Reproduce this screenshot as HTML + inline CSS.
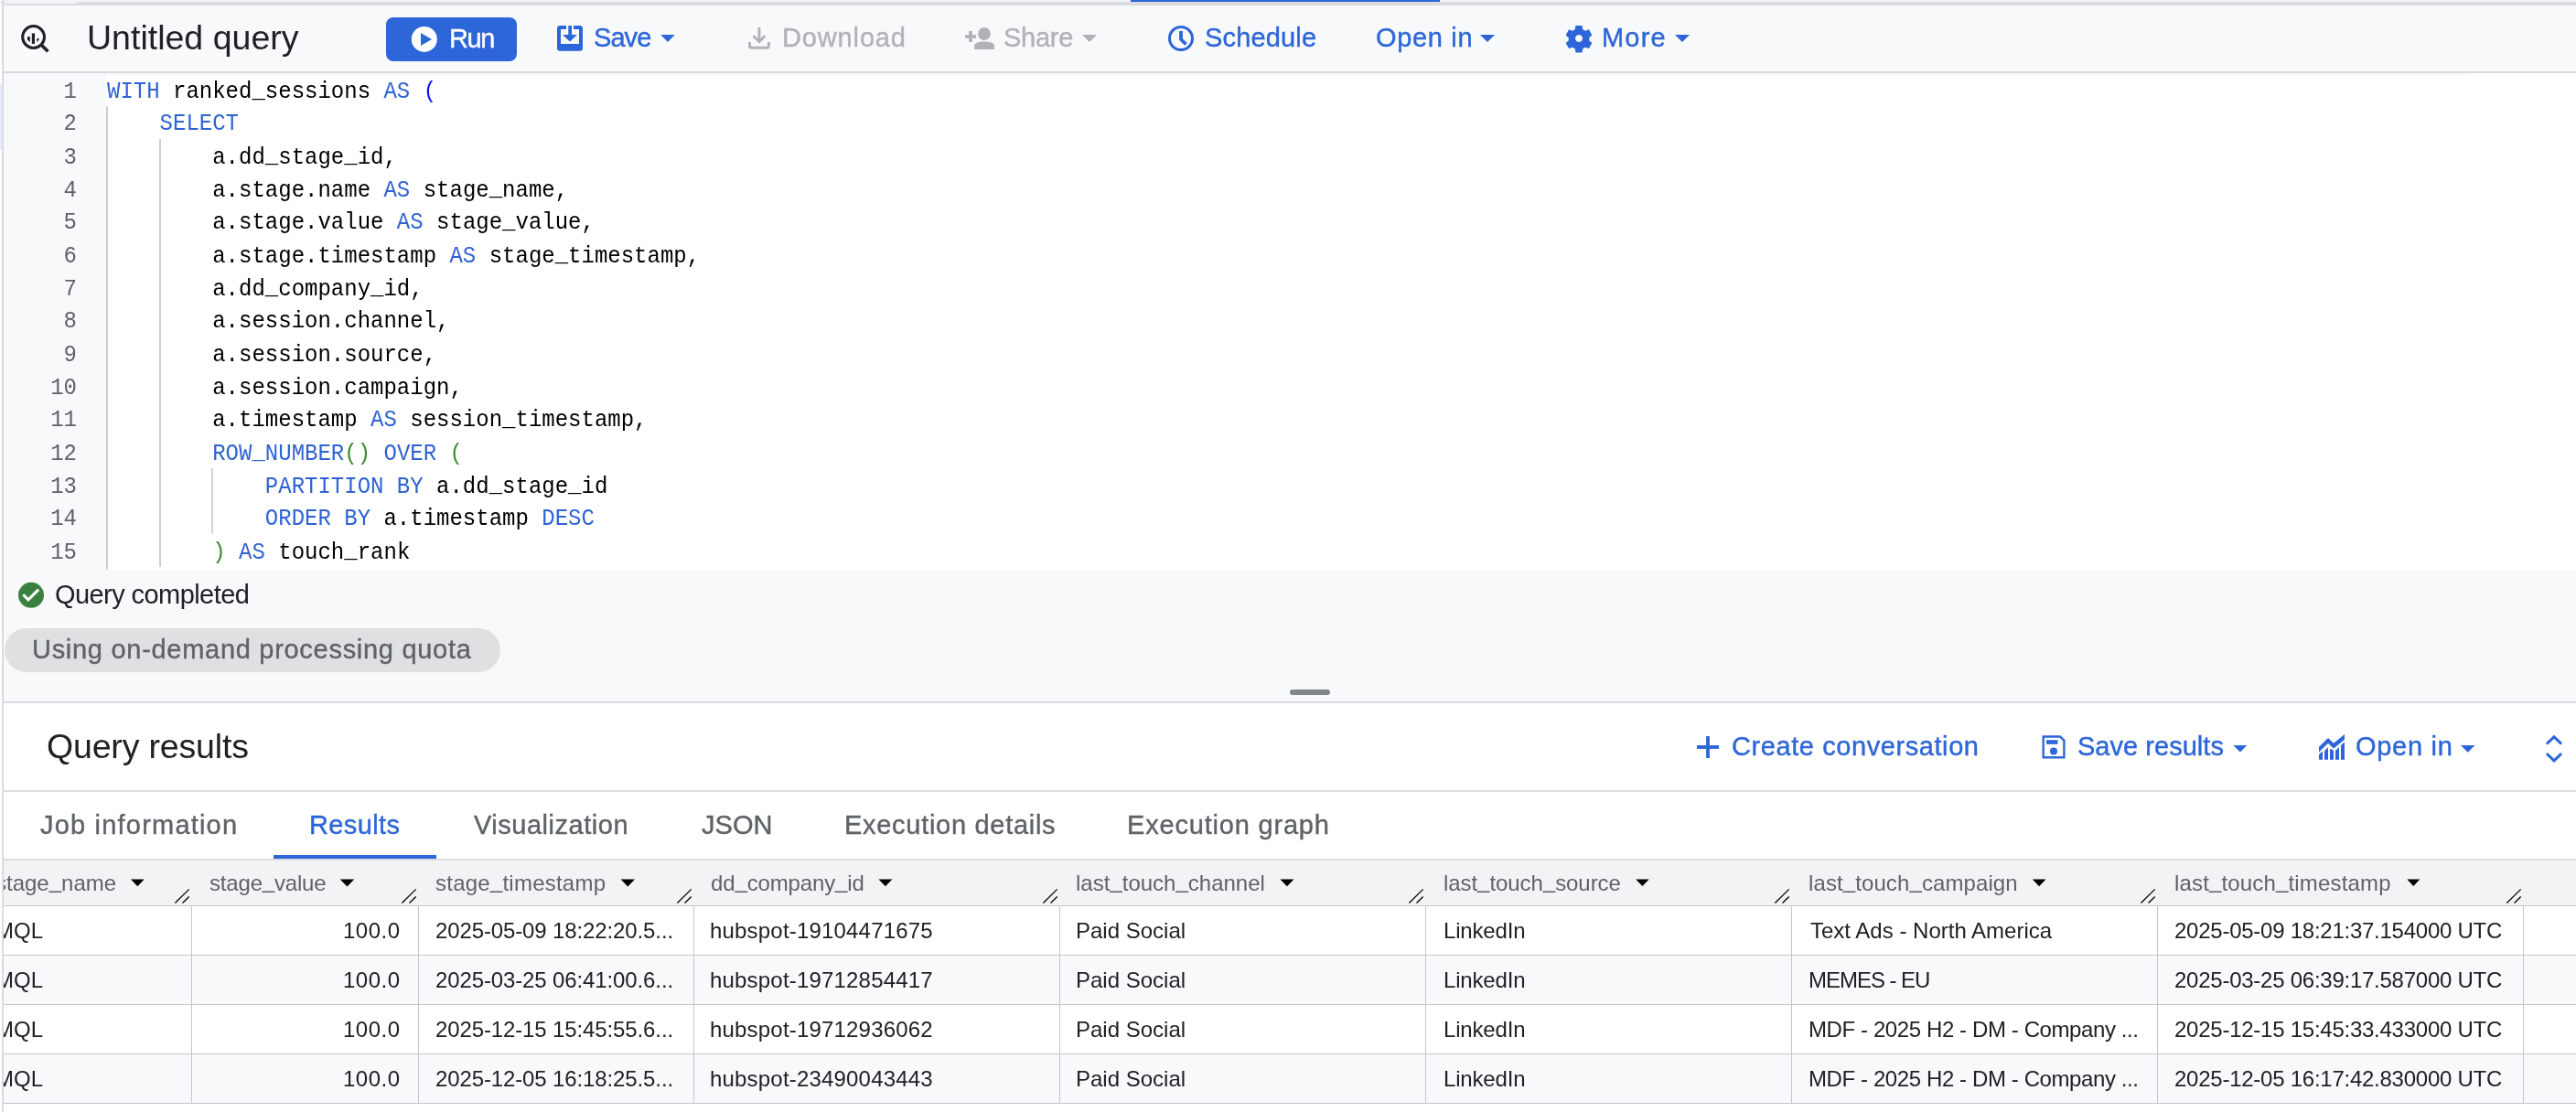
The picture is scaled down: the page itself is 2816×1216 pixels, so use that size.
<!DOCTYPE html>
<html><head><meta charset="utf-8">
<style>
html,body{margin:0;padding:0;}
body{width:2816px;height:1216px;position:relative;overflow:hidden;background:#fff;font-family:"Liberation Sans",sans-serif;}
.a{position:absolute;}
.t{position:absolute;white-space:pre;}
.s28{font-size:29px;line-height:29px;}
.s36{font-size:37.5px;line-height:37.5px;}
.s24{font-size:24px;line-height:24px;}
.blue{color:#2d66d8;}
.dis{color:#b0b2b5;}
.dark{color:#202124;}
.gray{color:#5f6368;}
svg{position:absolute;overflow:visible;}
.t,.code,.ln,.hd,.dt{will-change:transform;}
.s28{-webkit-text-stroke:0.4px;}
.qc{-webkit-text-stroke:0;}
/* editor */
.code{position:absolute;left:116.8px;font-family:"Liberation Mono",monospace;font-size:24px;line-height:33.333px;transform:scaleY(1.08);transform-origin:0 0;white-space:pre;color:#000;}
.ln{position:absolute;left:4px;width:80px;text-align:right;font-family:"Liberation Mono",monospace;font-size:24px;line-height:33.333px;transform:scaleY(1.08);transform-origin:0 0;color:#5f6368;}
.k{color:#2f63d2;}
.p{color:#3b8a2e;}
.pb{color:#0a14f5;}
.uh{position:relative;top:-3px;}
.uc{position:relative;top:-1.5px;}
.guide{position:absolute;width:2px;background:#cfcfcf;}
/* table */
.col{position:absolute;top:991px;width:1px;height:215px;background:#c4c7cb;}
.row{position:absolute;left:4px;width:2812px;height:1px;background:#c4c7cb;}
.hd{position:absolute;top:954px;font-size:24px;line-height:24px;color:#5f6368;white-space:pre;}
.dt{position:absolute;font-size:24px;line-height:24px;color:#202124;white-space:pre;}
</style></head>
<body>
<!-- top strip -->
<div class="a" style="left:4px;top:0;width:2812px;height:6px;background:#f1f3f4"></div>
<div class="a" style="left:4px;top:4px;width:80px;height:2px;background:#dadce0"></div>
<div class="a" style="left:84px;top:2px;width:2732px;height:4px;background:#dadce0"></div>
<div class="a" style="left:1236px;top:0;width:338px;height:2px;background:#2d66d8"></div>
<!-- header -->
<div class="a" style="left:4px;top:6px;width:2812px;height:72px;background:#f8f9fa"></div>
<div class="a" style="left:4px;top:78px;width:2812px;height:2px;background:#d9dadd"></div>

<!-- bq logo -->
<svg style="left:0;top:0" width="80" height="70" viewBox="0 0 80 70">
 <circle cx="36.6" cy="40.5" r="11.9" fill="none" stroke="#202124" stroke-width="3"/>
 <line x1="44.8" y1="48.8" x2="52.5" y2="56.2" stroke="#202124" stroke-width="3.6"/>
 <rect x="34.8" y="36.4" width="3.2" height="11.5" fill="#202124"/>
 <path d="M30 40 h2.8 v5.9 q-2 -0.8 -2.8 -2.6z" fill="#202124"/>
 <path d="M40.3 42 h2.6 q-0.4 2.6 -2.6 4z" fill="#202124"/>
</svg>
<div class="t s36 dark" style="left:94.6px;top:23px;letter-spacing:0.01px">Untitled query</div>

<!-- Run button -->
<div class="a" style="left:422px;top:19px;width:143px;height:48px;background:#2d66d8;border-radius:8px"></div>
<svg style="left:0;top:0" width="600" height="70" viewBox="0 0 600 70">
 <circle cx="463.8" cy="42.9" r="14" fill="#fff"/>
 <path d="M460 36.1 L472 42.9 L460 50z" fill="#2d66d8"/>
</svg>
<div class="t s28" style="left:490.6px;top:28px;letter-spacing:-1.4px;color:#fff">Run</div>

<!-- Save -->
<svg style="left:0;top:0" width="760" height="70" viewBox="0 0 760 70">
 <path d="M612 28 h7 v4 h-6 v16 h20 v-16 h-6 v-4 h7 a3 3 0 0 1 3 3 v21.8 a3 3 0 0 1 -3 3 h-22 a3 3 0 0 1 -3 -3 v-21.8 a3 3 0 0 1 3 -3z" fill="#2d66d8"/>
 <rect x="621.3" y="28" width="3.7" height="11" fill="#2d66d8"/>
 <path d="M615 38 h15.9 l-7.95 7.6z" fill="#2d66d8"/>
 <path d="M722.3 38 h15.4 l-7.7 7.9z" fill="#2d66d8"/>
</svg>
<div class="t s28 blue" style="left:648.5px;top:27px;letter-spacing:-0.93px">Save</div>

<!-- Download -->
<svg style="left:0;top:0" width="1000" height="70" viewBox="0 0 1000 70">
 <line x1="829.9" y1="30" x2="829.9" y2="45" stroke="#b0b2b5" stroke-width="3"/>
 <path d="M823.6 39.3 L829.9 45.6 L836.2 39.3" fill="none" stroke="#b0b2b5" stroke-width="3"/>
 <path d="M819.5 46 v4 a2.2 2.2 0 0 0 2.2 2.2 h16.5 a2.2 2.2 0 0 0 2.2 -2.2 v-4" fill="none" stroke="#b0b2b5" stroke-width="3"/>
</svg>
<div class="t s28 dis" style="left:854.5px;top:27px;letter-spacing:0.86px">Download</div>

<!-- Share -->
<svg style="left:0;top:0" width="1250" height="70" viewBox="0 0 1250 70">
 <rect x="1055" y="38.2" width="12" height="3.6" fill="#b0b2b5"/>
 <rect x="1059.1" y="34" width="3.8" height="12" fill="#b0b2b5"/>
 <circle cx="1076" cy="37" r="6.9" fill="#b0b2b5"/>
 <path d="M1065.1 54 v-4 c0 -3.2 6 -4.4 10.95 -4.4 c4.95 0 10.95 1.2 10.95 4.4 v4z" fill="#b0b2b5"/>
 <path d="M1183 38 h16 l-8 8z" fill="#b0b2b5"/>
</svg>
<div class="t s28 dis" style="left:1097px;top:27px;letter-spacing:-0.25px">Share</div>

<!-- Schedule -->
<svg style="left:0;top:0" width="1350" height="70" viewBox="0 0 1350 70">
 <circle cx="1291" cy="42" r="12.5" fill="none" stroke="#2d66d8" stroke-width="3"/>
 <path d="M1291 34 v9 l5.5 5.3" fill="none" stroke="#2d66d8" stroke-width="3.8"/>
</svg>
<div class="t s28 blue" style="left:1316.9px;top:27px;letter-spacing:0.16px">Schedule</div>

<!-- Open in -->
<svg style="left:0;top:0" width="1700" height="70" viewBox="0 0 1700 70">
 <path d="M1618 38 h16 l-8 8z" fill="#2d66d8"/>
</svg>
<div class="t s28 blue" style="left:1503.6px;top:27px;letter-spacing:0.67px">Open in</div>

<!-- More -->
<svg style="left:0;top:0" width="1900" height="70" viewBox="0 0 1900 70">
 <g transform="translate(1726 42)">
  <path d="M-3.5 -14 h7 l0.8 4.2 a10 10 0 0 1 2.6 1.5 l4 -1.4 l3.5 6.1 l-3.2 2.8 a10 10 0 0 1 0 3 l3.2 2.8 l-3.5 6.1 l-4 -1.4 a10 10 0 0 1 -2.6 1.5 l-0.8 4.2 h-7 l-0.8 -4.2 a10 10 0 0 1 -2.6 -1.5 l-4 1.4 l-3.5 -6.1 l3.2 -2.8 a10 10 0 0 1 0 -3 l-3.2 -2.8 l3.5 -6.1 l4 1.4 a10 10 0 0 1 2.6 -1.5z M0 -4 a4 4 0 1 0 0.01 0z" fill="#2d66d8" fill-rule="evenodd"/>
 </g>
 <path d="M1831 38 h16 l-8 8z" fill="#2d66d8"/>
</svg>
<div class="t s28 blue" style="left:1751.4px;top:27px;letter-spacing:1.2px">More</div>

<!-- editor -->
<div class="a" style="left:4px;top:80px;width:2812px;height:543px;background:#f8f9fa"></div>
<div class="a" style="left:116px;top:82px;width:2582px;height:541px;background:#fff"></div>
<div class="a" style="left:2698px;top:80px;width:118px;height:543px;background:#fff"></div>
<div class="a" style="left:0;top:92px;width:2px;height:72px;background:#e8eafd"></div>

<div class="guide" style="left:116px;top:116px;height:507px"></div>
<div class="guide" style="left:174px;top:152px;height:468px"></div>
<div class="guide" style="left:231px;top:512px;height:72px;background:#d4d4d4"></div>

<div class="ln" style="top:82.1px">1<br>2<br>3<br>4<br>5<br>6<br>7<br>8<br>9<br>10<br>11<br>12<br>13<br>14<br>15</div>
<div class="code" style="top:82.1px"><span class="k">WITH</span> ranked<span class="uc">_</span>sessions <span class="k">AS</span> <span class="pb">(</span>
    <span class="k">SELECT</span>
        a.dd<span class="uc">_</span>stage<span class="uc">_</span>id,
        a.stage.name <span class="k">AS</span> stage<span class="uc">_</span>name,
        a.stage.value <span class="k">AS</span> stage<span class="uc">_</span>value,
        a.stage.timestamp <span class="k">AS</span> stage<span class="uc">_</span>timestamp,
        a.dd<span class="uc">_</span>company<span class="uc">_</span>id,
        a.session.channel,
        a.session.source,
        a.session.campaign,
        a.timestamp <span class="k">AS</span> session<span class="uc">_</span>timestamp,
        <span class="k">ROW<span class="uc">_</span>NUMBER</span><span class="p">()</span> <span class="k">OVER</span> <span class="p">(</span>
            <span class="k">PARTITION BY</span> a.dd<span class="uc">_</span>stage<span class="uc">_</span>id
            <span class="k">ORDER BY</span> a.timestamp <span class="k">DESC</span>
        <span class="p">)</span> <span class="k">AS</span> touch<span class="uc">_</span>rank</div>

<!-- status area -->
<div class="a" style="left:4px;top:623px;width:2812px;height:144px;background:#f8f9fa"></div>
<svg style="left:0;top:0" width="100" height="700" viewBox="0 0 100 700">
 <circle cx="34" cy="650.8" r="14" fill="#3a8140"/>
 <path d="M25.3 650.3 L30.9 655.9 L42.2 644.6" fill="none" stroke="#fff" stroke-width="3"/>
</svg>
<div class="t s28 dark qc" style="left:60px;top:636px;letter-spacing:-0.57px">Query completed</div>
<div class="a" style="left:5px;top:687px;width:542px;height:48px;background:#dfe0e2;border-radius:24px"></div>
<div class="t s28 gray" style="left:34.8px;top:696px;letter-spacing:0.71px">Using on-demand processing quota</div>
<div class="a" style="left:1410px;top:754px;width:44px;height:6px;background:#80868b;border-radius:3px"></div>
<div class="a" style="left:4px;top:767px;width:2812px;height:2px;background:#dadce0"></div>

<!-- results header -->
<div class="t s36 dark" style="left:51px;top:798px;letter-spacing:-0.17px">Query results</div>
<svg style="left:0;top:0" width="2816" height="860" viewBox="0 0 2816 860">
 <rect x="1855" y="815" width="24" height="3.9" fill="#2d66d8"/>
 <rect x="1865.1" y="805" width="3.8" height="24" fill="#2d66d8"/>
 <path d="M2233.7 805.5 h18.4 l4.3 4.3 v18.5 h-22.7z" fill="none" stroke="#2d66d8" stroke-width="2.4"/>
 <rect x="2237" y="809.2" width="12.5" height="4.6" fill="#2d66d8"/>
 <circle cx="2245" cy="821.5" r="4" fill="#2d66d8"/>
 <path d="M2441.4 815 h15 l-7.5 7.5z" fill="#2d66d8"/>
 <path d="M2535 830.8 V824.9 L2539 821.2 V830.8z M2541 830.8 V820.9 L2545 817.2 V830.8z M2547 830.8 V819.3 H2549 L2550 820.5 H2551 V830.8z M2553 830.8 V820.9 L2557 817 V830.8z M2559 830.8 V815 L2563 811.2 V830.8z" fill="#2d66d8"/>
 <path d="M2535 816.8 L2545 807 L2551 812.8 L2563 803 V808.7 L2551 818.5 L2545 812.7 L2535 822.5z" fill="#2d66d8"/>
 <path d="M2690 815 h15.5 l-7.75 7.75z" fill="#2d66d8"/>
 <path d="M2784.8 812.6 L2792 805.8 L2799.2 812.6 M2784.8 824.8 L2792 831.8 L2799.2 824.8" fill="none" stroke="#2d66d8" stroke-width="3" stroke-linecap="round"/>
</svg>
<div class="t s28 blue" style="left:1893.1px;top:802px;letter-spacing:0.58px">Create conversation</div>
<div class="t s28 blue" style="left:2270.7px;top:802px;letter-spacing:0.03px">Save results</div>
<div class="t s28 blue" style="left:2575px;top:802px;letter-spacing:0.7px">Open in</div>
<div class="a" style="left:4px;top:864px;width:2812px;height:2px;background:#dadce0"></div>

<!-- tabs -->
<div class="t s28 gray" style="left:43.8px;top:888px;letter-spacing:1.2px">Job information</div>
<div class="t s28 blue" style="left:337.7px;top:888px;letter-spacing:0.38px">Results</div>
<div class="t s28 gray" style="left:517.7px;top:888px;letter-spacing:0.52px">Visualization</div>
<div class="t s28 gray" style="left:766.9px;top:888px;letter-spacing:0.03px">JSON</div>
<div class="t s28 gray" style="left:922.7px;top:888px;letter-spacing:0.71px">Execution details</div>
<div class="t s28 gray" style="left:1232.3px;top:888px;letter-spacing:0.81px">Execution graph</div>
<div class="a" style="left:4px;top:939px;width:2812px;height:2px;background:#dadce0"></div>
<div class="a" style="left:299px;top:935px;width:178px;height:4px;background:#2d66d8"></div>

<!-- table -->
<div class="a" style="left:4px;top:941px;width:2812px;height:49px;background:#f1f3f4"></div>
<div class="row" style="top:990px"></div>
<div class="a" style="left:4px;top:1045px;width:2812px;height:53px;background:#f8f9fa"></div>
<div class="a" style="left:4px;top:1153px;width:2812px;height:53px;background:#f8f9fa"></div>
<div class="row" style="top:1044px"></div>
<div class="row" style="top:1098px"></div>
<div class="row" style="top:1152px"></div>
<div class="row" style="top:1206px"></div>
<div class="col" style="left:209px"></div>
<div class="col" style="left:457px"></div>
<div class="col" style="left:758px"></div>
<div class="col" style="left:1158px"></div>
<div class="col" style="left:1558px"></div>
<div class="col" style="left:1958px"></div>
<div class="col" style="left:2358px"></div>
<div class="col" style="left:2758px"></div>

<svg style="left:0;top:0" width="2816" height="1000" viewBox="0 0 2816 1000">
 <g fill="#000">
  <path d="M143 961.6 h14.7 l-7.35 7.7z"/>
  <path d="M371.7 961.6 h15.6 l-7.8 8z"/>
  <path d="M678.6 961.6 h15.4 l-7.7 7.9z"/>
  <path d="M960.4 961.6 h15 l-7.5 7.7z"/>
  <path d="M1399.4 961.6 h15.1 l-7.55 7.7z"/>
  <path d="M1788.2 961.6 h14.5 l-7.25 7.5z"/>
  <path d="M2221.8 961.6 h14.7 l-7.35 7.6z"/>
  <path d="M2631.4 961.6 h13.9 l-7 7.3z"/>
 </g>
 <g stroke="#000" stroke-width="1.3" fill="none" id="rh">
  <path d="M191.4 987.5 L206.7 972.4 M199.5 987.5 L206.7 980.5"/>
  <path d="M439.4 987.5 L454.7 972.4 M447.5 987.5 L454.7 980.5"/>
  <path d="M740.4 987.5 L755.7 972.4 M748.5 987.5 L755.7 980.5"/>
  <path d="M1140.4 987.5 L1155.7 972.4 M1148.5 987.5 L1155.7 980.5"/>
  <path d="M1540.4 987.5 L1555.7 972.4 M1548.5 987.5 L1555.7 980.5"/>
  <path d="M1940.4 987.5 L1955.7 972.4 M1948.5 987.5 L1955.7 980.5"/>
  <path d="M2340.4 987.5 L2355.7 972.4 M2348.5 987.5 L2355.7 980.5"/>
  <path d="M2740.4 987.5 L2755.7 972.4 M2748.5 987.5 L2755.7 980.5"/>
 </g>
</svg>

<div class="a" style="left:4px;top:941px;width:2812px;height:275px;overflow:hidden">
 <div class="hd" style="left:-9.5px;top:13px">stage<span class="uh">_</span>name</div>
</div>
<div class="hd" style="left:228.8px;letter-spacing:-0.18px">stage<span class="uh">_</span>value</div>
<div class="hd" style="left:476.3px;letter-spacing:0.23px">stage<span class="uh">_</span>timestamp</div>
<div class="hd" style="left:777.4px;letter-spacing:-0.14px">dd<span class="uh">_</span>company<span class="uh">_</span>id</div>
<div class="hd" style="left:1176.4px">last<span class="uh">_</span>touch<span class="uh">_</span>channel</div>
<div class="hd" style="left:1577.7px;letter-spacing:-0.06px">last<span class="uh">_</span>touch<span class="uh">_</span>source</div>
<div class="hd" style="left:1977px;letter-spacing:0.1px">last<span class="uh">_</span>touch<span class="uh">_</span>campaign</div>
<div class="hd" style="left:2377.3px;letter-spacing:0.16px">last<span class="uh">_</span>touch<span class="uh">_</span>timestamp</div>

<!-- rows -->
<div class="a" style="left:4px;top:991px;width:205px;height:215px;overflow:hidden">
 <div class="dt" style="left:-9.5px;top:15px">MQL</div>
 <div class="dt" style="left:-9.5px;top:69px">MQL</div>
 <div class="dt" style="left:-9.5px;top:123px">MQL</div>
 <div class="dt" style="left:-9.5px;top:177px">MQL</div>
</div>

<div class="dt" style="left:375.3px;top:1006px;letter-spacing:0.5px">100.0</div>
<div class="dt" style="left:476.3px;top:1006px;letter-spacing:-0.12px">2025-05-09 18:22:20.5...</div>
<div class="dt" style="left:776.4px;top:1006px;letter-spacing:0.19px">hubspot-19104471675</div>
<div class="dt" style="left:1176.4px;top:1006px">Paid Social</div>
<div class="dt" style="left:1577.7px;top:1006px;letter-spacing:-0.17px">LinkedIn</div>
<div class="dt" style="left:1979px;top:1006px">Text Ads - North America</div>
<div class="dt" style="left:2377.3px;top:1006px;letter-spacing:-0.25px">2025-05-09 18:21:37.154000 UTC</div>

<div class="dt" style="left:375.3px;top:1060px;letter-spacing:0.5px">100.0</div>
<div class="dt" style="left:476.3px;top:1060px;letter-spacing:-0.12px">2025-03-25 06:41:00.6...</div>
<div class="dt" style="left:776.4px;top:1060px;letter-spacing:0.19px">hubspot-19712854417</div>
<div class="dt" style="left:1176.4px;top:1060px">Paid Social</div>
<div class="dt" style="left:1577.7px;top:1060px;letter-spacing:-0.17px">LinkedIn</div>
<div class="dt" style="left:1977px;top:1060px;letter-spacing:-1.03px">MEMES - EU</div>
<div class="dt" style="left:2377.3px;top:1060px;letter-spacing:-0.25px">2025-03-25 06:39:17.587000 UTC</div>

<div class="dt" style="left:375.3px;top:1114px;letter-spacing:0.5px">100.0</div>
<div class="dt" style="left:476.3px;top:1114px;letter-spacing:-0.12px">2025-12-15 15:45:55.6...</div>
<div class="dt" style="left:776.4px;top:1114px;letter-spacing:0.19px">hubspot-19712936062</div>
<div class="dt" style="left:1176.4px;top:1114px">Paid Social</div>
<div class="dt" style="left:1577.7px;top:1114px;letter-spacing:-0.17px">LinkedIn</div>
<div class="dt" style="left:1977px;top:1114px;letter-spacing:-0.4px">MDF - 2025 H2 - DM - Company ...</div>
<div class="dt" style="left:2377.3px;top:1114px;letter-spacing:-0.25px">2025-12-15 15:45:33.433000 UTC</div>

<div class="dt" style="left:375.3px;top:1168px;letter-spacing:0.5px">100.0</div>
<div class="dt" style="left:476.3px;top:1168px;letter-spacing:-0.12px">2025-12-05 16:18:25.5...</div>
<div class="dt" style="left:776.4px;top:1168px;letter-spacing:0.19px">hubspot-23490043443</div>
<div class="dt" style="left:1176.4px;top:1168px">Paid Social</div>
<div class="dt" style="left:1577.7px;top:1168px;letter-spacing:-0.17px">LinkedIn</div>
<div class="dt" style="left:1977px;top:1168px;letter-spacing:-0.4px">MDF - 2025 H2 - DM - Company ...</div>
<div class="dt" style="left:2377.3px;top:1168px;letter-spacing:-0.25px">2025-12-05 16:17:42.830000 UTC</div>

<!-- left vertical border -->
<div class="a" style="left:2px;top:0;width:2px;height:1216px;background:#dadce0"></div>
<div class="a" style="left:0;top:2px;width:2px;height:1px;background:#dadce0"></div>
</body></html>
